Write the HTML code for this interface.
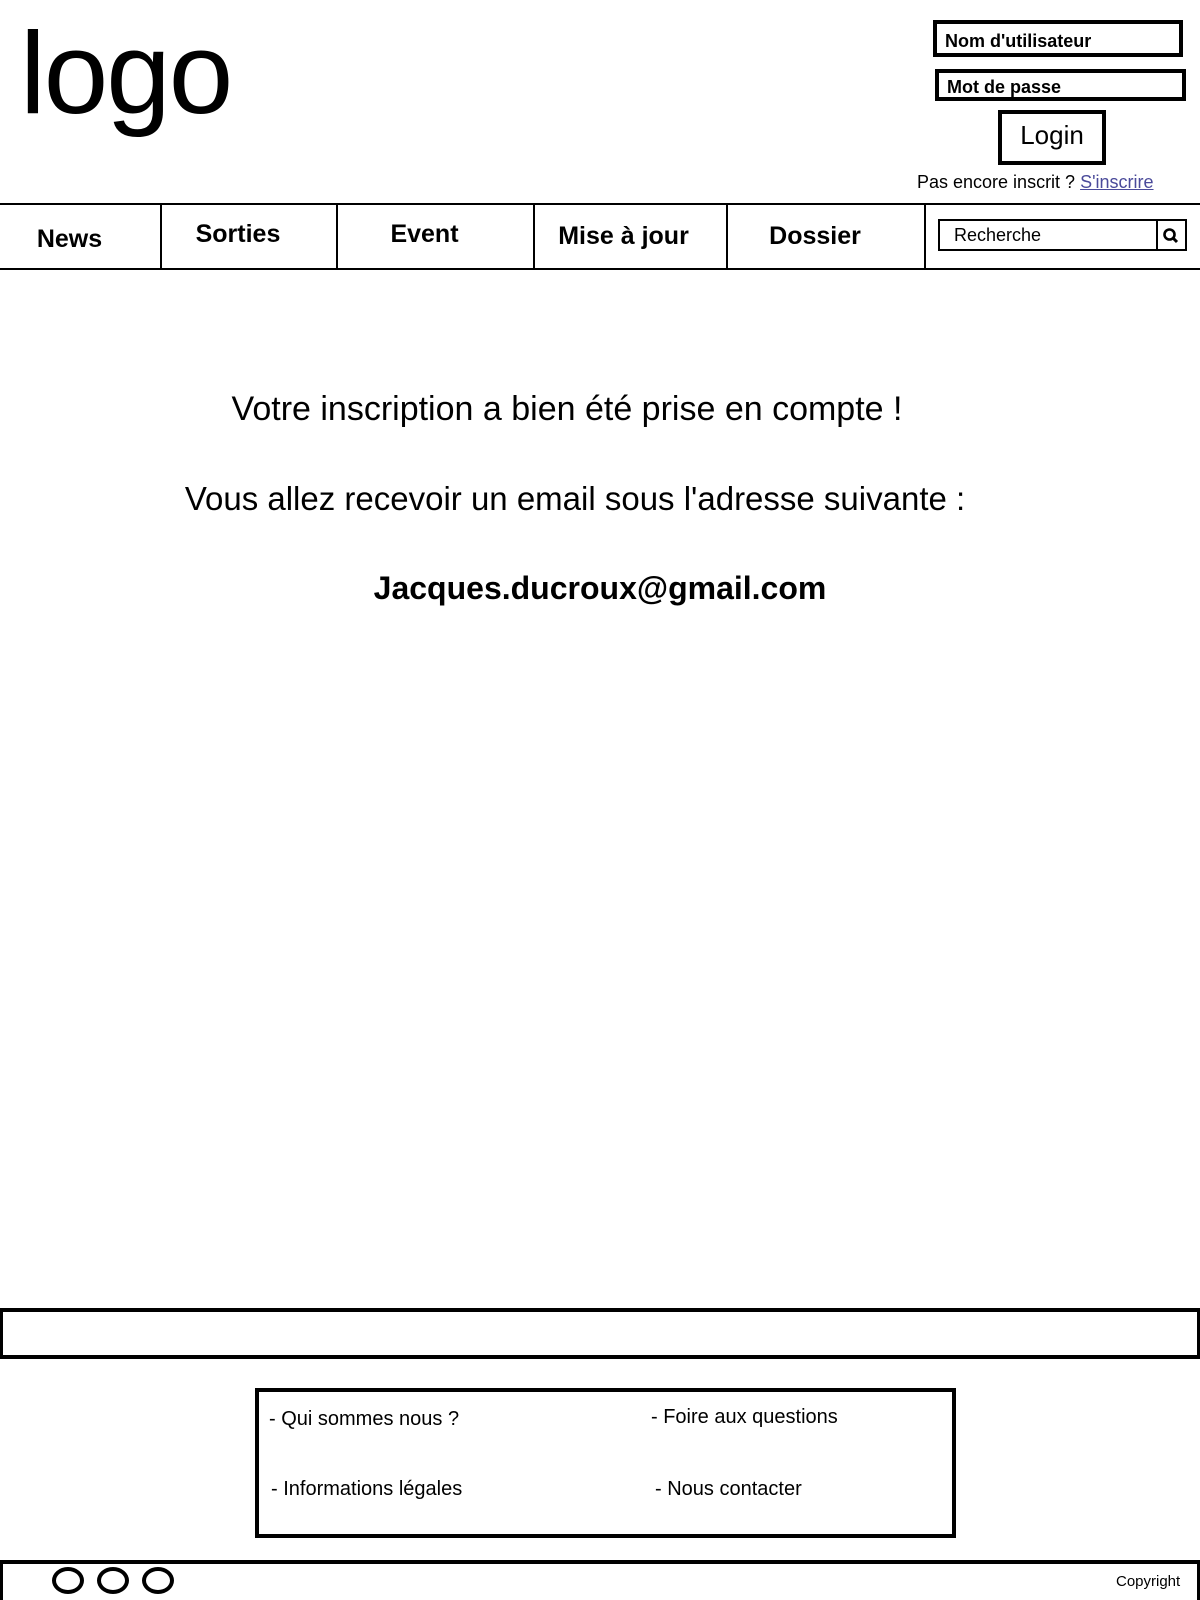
<!DOCTYPE html>
<html><head><meta charset="utf-8"><style>
*{margin:0;padding:0;box-sizing:border-box}
body{width:1200px;height:1600px;background:#fff;position:relative;overflow:hidden;font-family:"Liberation Sans",sans-serif;color:#000}
.a{position:absolute}
.logo{left:20px;top:4px;font-size:116px;letter-spacing:-2px;line-height:1.2}
.inp{border:4px solid #000;font-weight:bold;font-size:18px;padding-left:8px;line-height:1}
.nav{left:0;top:203px;width:1200px;height:67px;border-top:2px solid #000;border-bottom:2px solid #000}
.cell{position:absolute;top:0;height:63px;font-weight:bold;font-size:25px;text-align:center;line-height:63px;padding-right:22px}
.div{position:absolute;top:0;width:2px;height:63px;background:#000}
.msg{left:0;width:1200px;font-size:33px;text-align:center}
.ft{font-size:20px}
.circ{width:32px;height:27px;border:4px solid #000;border-radius:50%;top:1567px}
</style></head><body>
<div class="a logo">logo</div>
<div class="a inp" style="left:933px;top:20px;width:250px;height:37px;padding-top:8px">Nom d'utilisateur</div>
<div class="a inp" style="left:935px;top:69px;width:251px;height:32px;padding-top:5px">Mot de passe</div>
<div class="a" style="left:998px;top:110px;width:108px;height:55px;border:4px solid #000;font-size:26px;text-align:center;line-height:42px">Login</div>
<div class="a" style="left:917px;top:172px;font-size:18px">Pas encore inscrit ? <span style="color:#4a4a9a;text-decoration:underline">S'inscrire</span></div>
<div class="a nav">
<div class="cell" style="left:0;width:161px;top:3px">News</div>
<div class="div" style="left:160px"></div>
<div class="cell" style="left:161px;width:176px;top:-2px">Sorties</div>
<div class="div" style="left:336px"></div>
<div class="cell" style="left:337px;width:197px;top:-2px">Event</div>
<div class="div" style="left:533px"></div>
<div class="cell" style="left:534px;width:193px;padding-right:14px">Mise à jour</div>
<div class="div" style="left:726px"></div>
<div class="cell" style="left:727px;width:198px">Dossier</div>
<div class="div" style="left:924px"></div>
<div class="a" style="left:938px;top:14px;width:249px;height:32px;border:2px solid #000;font-size:18px;line-height:28px;padding-left:14px">Recherche
<div class="a" style="left:216px;top:-2px;width:2px;height:32px;background:#000"></div>
<svg class="a" style="left:222px;top:6px" width="18" height="18" viewBox="0 0 18 18"><circle cx="7.5" cy="7.5" r="5" fill="none" stroke="#000" stroke-width="2.6"/><path d="M11 11 L15 15" stroke="#000" stroke-width="3"/></svg>
</div>
</div>
<div class="a msg" style="top:390px;left:-33px;font-size:34px">Votre inscription a bien été prise en compte !</div>
<div class="a msg" style="top:480px;left:-25px">Vous allez recevoir un email sous l'adresse suivante :</div>
<div class="a msg" style="top:570px;left:0;font-weight:bold;font-size:32px">Jacques.ducroux@gmail.com</div>
<div class="a" style="left:0;top:1308px;width:1200px;height:51px;border-top:4px solid #000;border-bottom:4px solid #000;border-left:3px solid #000;border-right:3px solid #000"></div>
<div class="a" style="left:255px;top:1388px;width:701px;height:150px;border:4px solid #000"></div>
<div class="a ft" style="left:269px;top:1408px">- Qui sommes nous ?</div>
<div class="a ft" style="left:651px;top:1406px">- Foire aux questions</div>
<div class="a ft" style="left:271px;top:1478px">- Informations légales</div>
<div class="a ft" style="left:655px;top:1478px">- Nous contacter</div>
<div class="a" style="left:0;top:1560px;width:1200px;height:40px;border-top:4px solid #000;border-left:3px solid #000;border-right:3px solid #000"></div>
<div class="a circ" style="left:52px"></div>
<div class="a circ" style="left:97px"></div>
<div class="a circ" style="left:142px"></div>
<div class="a" style="left:1116px;top:1573px;font-size:15px">Copyright</div>
</body></html>
